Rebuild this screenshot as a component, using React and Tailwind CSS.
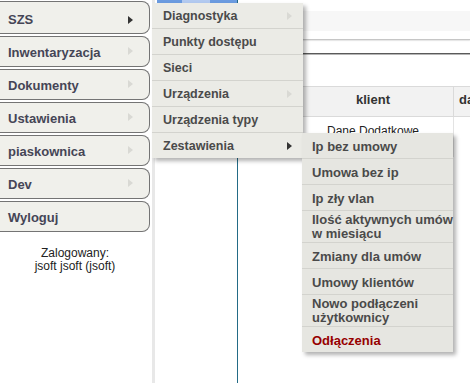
import React from "react";

const LEFT = [
  { t: "SZS", arrow: "dark", h: "h-[33px]", pt: "pt-[10px]", amt: "mt-[4px]" },
  { t: "Inwentaryzacja", arrow: "light" },
  { t: "Dokumenty", arrow: "light" },
  { t: "Ustawienia", arrow: "light" },
  { t: "piaskownica", arrow: "light" },
  { t: "Dev", arrow: "light" },
  { t: "Wyloguj" },
];

const L2 = [
  { t: "Diagnostyka", arrow: "light" },
  { t: "Punkty dostępu" },
  { t: "Sieci" },
  { t: "Urządzenia", arrow: "light" },
  { t: "Urządzenia typy" },
  { t: "Zestawienia", arrow: "dark", last: true },
];

const L3 = [
  { lines: ["Ip bez umowy"] },
  { lines: ["Umowa bez ip"] },
  { lines: ["Ip zły vlan"] },
  { lines: ["Ilość aktywnych umów", "w miesiącu"] },
  { lines: ["Zmiany dla umów"] },
  { lines: ["Umowy klientów"] },
  { lines: ["Nowo podłączeni", "użytkownicy"] },
  { lines: ["Odłączenia"], red: true, last: true },
];

function Arrow({ kind, className = "" }) {
  return (
    <span
      className={
        "ml-auto block w-0 h-0 shrink-0 border-y-[4px] border-y-transparent border-l-[5px] " +
        (kind === "dark" ? "border-l-[#333333] " : "border-l-[#d9d9d4] ") +
        className
      }
    />
  );
}

export default function App() {
  return (
    <div className="relative w-[470px] h-[383px] overflow-hidden bg-white font-['Liberation_Sans',Arial,sans-serif]">
      <div className="flex h-full">
        <aside className="w-[152px] shrink-0 flex flex-col">
          <div className="flex flex-col gap-[2px] pt-[1px]">
            {LEFT.map((b) => (
              <div
                key={b.t}
                className={
                  "w-[150px] flex items-start border border-l-0 border-[#747474] rounded-r-[8px] bg-[#f0f0eb] pl-[8px] pr-[16px] text-[13px] font-bold leading-[15px] text-[#454556] " +
                  (b.h || "h-[31px]") +
                  " " +
                  (b.pt || "pt-[8px]")
                }
              >
                <span>{b.t}</span>
                {b.arrow && <Arrow kind={b.arrow} className={b.amt || "mt-[2px]"} />}
              </div>
            ))}
          </div>
          <div className="mt-[15px] w-[150px] text-center text-[12px] leading-[13px] text-[#222222]">
            <div>Zalogowany:</div>
            <div>jsoft jsoft (jsoft)</div>
          </div>
        </aside>

        <main className="flex-1 flex border-l-[3px] border-[#e8e8e8]">
          <div className="w-[82px] shrink-0">
            <div className="ml-[2px] h-[3px] bg-[#6b9be0] flex">
              <div className="ml-[25px] w-[28px] bg-[#b3caf0]" />
            </div>
          </div>
          <div className="flex-1 min-w-0 border-l border-[#236b86] flex flex-col">
            <div className="h-[11px]" />
            <div className="h-[20px] bg-[#f7f7f7]" />
            <div className="h-[8px]" />
            <div className="h-px bg-[#c6c6c6] shadow-[0_1px_1px_#e2e2e2]" />
            <div className="h-[13px]" />
            <div className="h-px bg-[#5a5a5a] shadow-[0_1px_0_#b5b5b5]" />
            <div className="h-[32px]" />
            <div className="grid grid-cols-[55px_160px_1fr] h-[31px] border-y border-[#dadada] bg-[#f2f2f2] text-[13px] font-bold leading-[15px] text-[#333333]">
              <div className="border-r border-[#dadada]" />
              <div className="pt-[5px] text-center">klient</div>
              <div className="pt-[5px] pl-[5px] border-l border-[#dadada] whitespace-nowrap overflow-hidden">data</div>
            </div>
            <div className="grid grid-cols-[55px_160px_1fr] h-[40px] text-[12px] leading-[14px] text-[#222222]">
              <div className="border-r border-[#e6e6e6]" />
              <div className="pt-[7px] text-center">Dane Dodatkowe</div>
              <div className="border-l border-[#e3e3e3]" />
            </div>
          </div>
        </main>
      </div>

      <div className="absolute left-[152px] top-[3px] w-[151px] bg-[#ebebe6] shadow-[3px_3px_4px_rgba(0,0,0,0.3)]">
        {L2.map((it) => (
          <div
            key={it.t}
            className={
              "flex items-start pt-[6px] pl-[11px] pr-[11px] text-[12.5px] font-bold leading-[15px] text-[#4a4a4a] " +
              (it.last ? "h-[25px]" : "h-[26px] border-b border-[#d3d3ce]")
            }
          >
            <span>{it.t}</span>
            {it.arrow && <Arrow kind={it.arrow} className="mt-[3px]" />}
          </div>
        ))}
      </div>

      <div className="absolute left-[302px] top-[133px] w-[151px] bg-[#e6e6e1] shadow-[3px_3px_4px_rgba(0,0,0,0.3)]">
        {L3.map((it) => {
          const two = it.lines.length > 1;
          return (
            <div
              key={it.lines.join(" ")}
              className={
                "pl-[10px] text-[13px] font-bold whitespace-nowrap " +
                (it.red ? "text-[#960000] " : "text-[#4a4a4a] ") +
                (two ? "pt-[2px] leading-[14px] " : "pt-[6px] leading-[15px] ") +
                (it.last ? "h-[25px]" : (two ? "h-[32px]" : "h-[26px]") + " border-b border-[#d3d3ce]")
              }
            >
              {it.lines.map((l) => (
                <div key={l}>{l}</div>
              ))}
            </div>
          );
        })}
      </div>
    </div>
  );
}
